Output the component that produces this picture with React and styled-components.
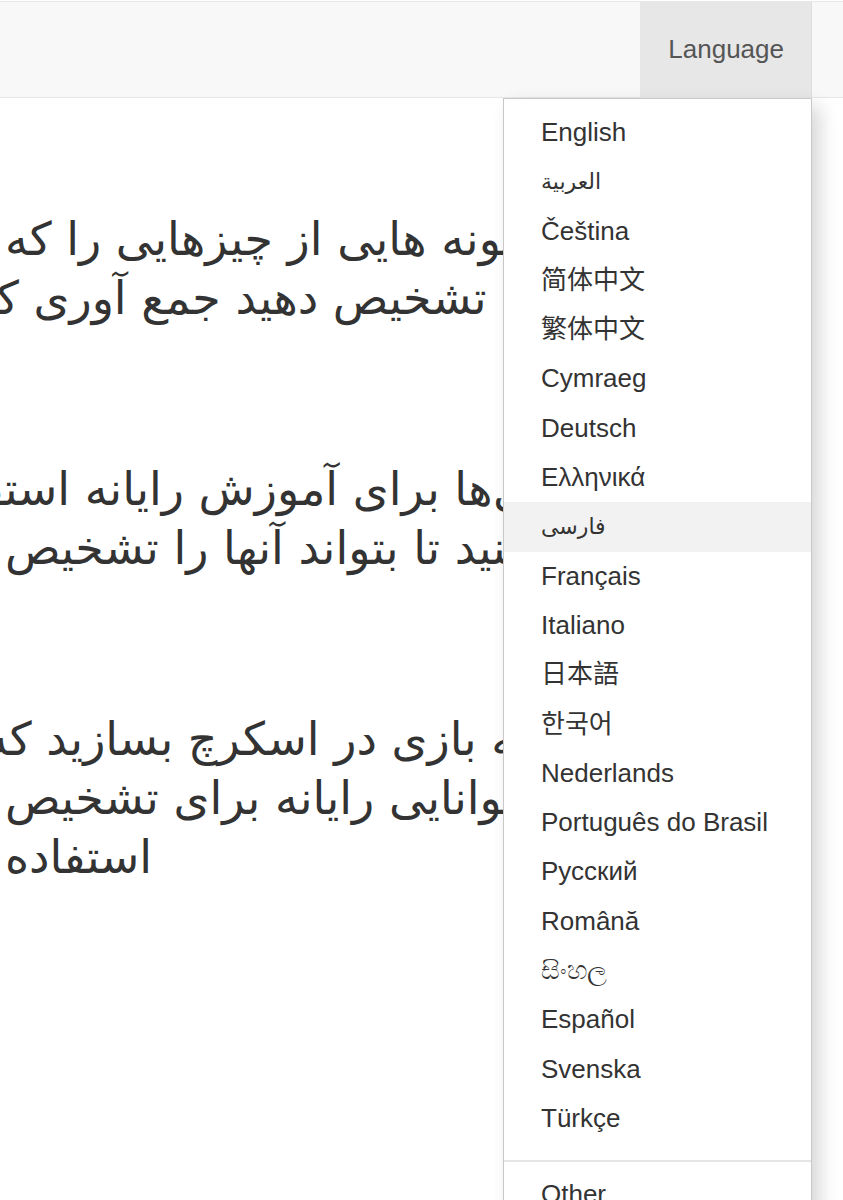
import React from 'react';
import styled, { createGlobalStyle } from 'styled-components';

const languages = [
  { label: 'English' },
  { label: 'العربية', arabic: true },
  { label: 'Čeština' },
  { label: '简体中文' },
  { label: '繁体中文' },
  { label: 'Cymraeg' },
  { label: 'Deutsch' },
  { label: 'Ελληνικά' },
  { label: 'فارسی', arabic: true, active: true },
  { label: 'Français' },
  { label: 'Italiano' },
  { label: '日本語' },
  { label: '한국어' },
  { label: 'Nederlands' },
  { label: 'Português do Brasil' },
  { label: 'Русский' },
  { label: 'Română' },
  { label: 'සිංහල' },
  { label: 'Español' },
  { label: 'Svenska' },
  { label: 'Türkçe' },
];

// each paragraph is split the way the page wraps it; overhang = how far the line runs past the left edge
const paragraphs = [
  [
    { text: 'نمونه هایی از چیزهایی را که' },
    { text: 'می‌خواهید بتوانید تشخیص دهید جمع آوری کنید', overhang: 60 },
  ],
  [
    { text: 'از این مثال‌ها برای آموزش رایانه استفاده', overhang: 82 },
    { text: 'از نمونه‌ها استفاده کنید تا بتواند آنها را تشخیص' },
  ],
  [
    { text: 'یک برنامه بازی در اسکرچ بسازید که', overhang: 20 },
    { text: 'از توانایی رایانه برای تشخیص' },
    { text: 'استفاده' },
  ],
];

function App() {
  return (
    <>
      <GlobalStyle />
      <NavBar>
        <LangWrap>
          <LangButton>Language</LangButton>
          <Menu>
            {languages.map((lang) => (
              <MenuItem key={lang.label} $active={lang.active} $arabic={lang.arabic}>
                {lang.label}
              </MenuItem>
            ))}
            <Divider />
            <MenuItem>Other</MenuItem>
          </Menu>
        </LangWrap>
      </NavBar>
      <Content>
        {paragraphs.map((lines, i) => (
          <Paragraph key={i}>
            {lines.map((line, j) => (
              <Line key={j} $overhang={line.overhang || 0}>
                {line.text}
              </Line>
            ))}
          </Paragraph>
        ))}
      </Content>
    </>
  );
}

const GlobalStyle = createGlobalStyle`
  html {
    overflow: hidden;
    height: 100%;
  }
  body {
    margin: 0;
    padding: 0;
    min-height: 100%;
    background: #fff;
    font-family: "Liberation Sans", Arial, "DejaVu Sans", sans-serif;
    color: #333;
  }
`;

const NavBar = styled.div`
  margin-top: 1px;
  height: 95px;
  border-top: 1px solid #e7e7e7;
  border-bottom: 1px solid #e7e7e7;
  background-color: #f8f8f8;
  display: flex;
  justify-content: flex-end;
  padding-right: 31px;
`;

const LangWrap = styled.div`
  position: relative;
  border-right: 1px solid #dedede;
`;

const LangButton = styled.div`
  height: 95px;
  padding: 0 27px 0 28px;
  background-color: #e7e7e7;
  color: #555;
  font-size: 26px;
  display: flex;
  align-items: center;
`;

const Menu = styled.ul`
  position: absolute;
  top: calc(100% + 1px);
  right: -1px;
  width: 309px;
  box-sizing: border-box;
  margin: 0;
  padding: 9px 0;
  list-style: none;
  background: #fff;
  border: 1px solid #c8c8c8;
  box-shadow: 8px 8px 18px rgba(0, 0, 0, 0.16);
  z-index: 10;
`;

const MenuItem = styled.li`
  height: 49.3px;
  line-height: 49.3px;
  padding-left: 37px;
  font-size: ${(p) => (p.$arabic ? '22px' : '26px')};
  font-family: "Liberation Sans", "DejaVu Sans", "Noto Sans", "Noto Sans CJK SC", "Noto Sans CJK KR", sans-serif;
  color: #333;
  white-space: nowrap;
  background-color: ${(p) => (p.$active ? '#f2f2f2' : 'transparent')};
`;

const Divider = styled.li`
  height: 2px;
  margin: 17px 0 8px;
  background-color: #e5e5e5;
`;

const Content = styled.div`
  width: 806px;
  padding: 112px 0 0 5px;
  overflow: hidden;
  display: flex;
  flex-direction: column;
  align-items: flex-start;
  font-family: "DejaVu Sans", "Liberation Sans", sans-serif;
  font-size: 46px;
  line-height: 59px;
  color: #333;
`;

const Paragraph = styled.div`
  display: flex;
  flex-direction: column;
  align-items: flex-start;
  margin-bottom: 132px;
`;

const Line = styled.div`
  direction: rtl;
  white-space: nowrap;
  margin-left: ${(p) => -p.$overhang}px;
`;

export default App;
